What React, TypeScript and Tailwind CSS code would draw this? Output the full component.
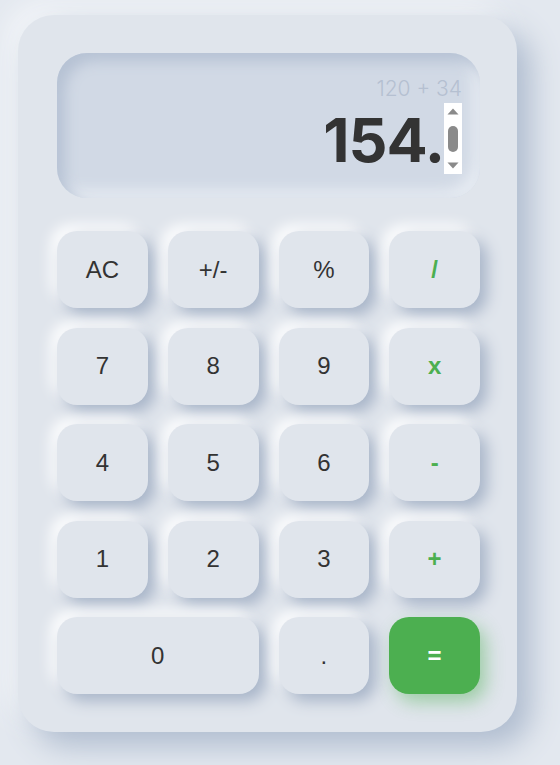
import React from "react";

const btnBase =
  "flex items-center justify-center h-[77px] rounded-[20px] bg-[#e0e5ec] text-[24px] shadow-[7px_7px_15px_#a7b4c8,-6px_-6px_14px_#ffffff]";

function Key({ label, op = false, wide = false }: { label: string; op?: boolean; wide?: boolean }) {
  return (
    <div
      className={
        btnBase +
        (wide ? " col-span-2" : "") +
        (op ? " text-[#4caf50] font-bold" : " text-[#333333]")
      }
      style={{ fontFamily: '"Liberation Sans", Arial, sans-serif' }}
    >
      {label}
    </div>
  );
}

export default function App() {
  return (
    <div className="min-h-[765px] w-[560px] bg-[#e3e8ef] pt-[15px] pl-[18px]">
      <div className="w-[499px] h-[717px] rounded-[36px] bg-[#e0e5ec] pt-[38px] pl-[39px] pr-[37px] shadow-[14px_14px_30px_#afbccf,-12px_-12px_30px_#f4f6f9]">
        <div className="h-[145px] rounded-[30px] bg-[#d1d9e5] shadow-[inset_8px_8px_14px_#b6c2d4,inset_-8px_-8px_14px_#e6ebf2] flex flex-col items-end pr-[18px] pt-[25px]">
          <div
            className="text-[21px] leading-[22px] font-light text-[#b5c0d1]"
            style={{ fontFamily: 'Inter, "Noto Sans", sans-serif' }}
          >
            120 + 34
          </div>
          <div className="flex items-start mt-[3px]">
            <div
              className="text-[61px] leading-[66px] font-bold text-[#333333] tracking-[-1px] mt-[4px]"
              style={{ fontFamily: 'Inter, "Noto Sans", sans-serif' }}
            >
              154.
            </div>
            <div className="w-[18px] h-[71px] bg-white flex flex-col items-center justify-between py-[5px]">
              <svg width="12" height="7" viewBox="0 0 12 7">
                <path d="M6 0.5 L11.5 6.5 L0.5 6.5 Z" fill="#8a8a8a" />
              </svg>
              <div className="w-[10px] h-[26px] rounded-full bg-[#8a8a8a]" />
              <svg width="12" height="7" viewBox="0 0 12 7">
                <path d="M0.5 0.5 L11.5 0.5 L6 6.5 Z" fill="#8a8a8a" />
              </svg>
            </div>
          </div>
        </div>
        <div className="grid grid-cols-4 gap-x-[20px] gap-y-[19.5px] mt-[33px]">
          <Key label="AC" />
          <Key label="+/-" />
          <Key label="%" />
          <Key label="/" op />
          <Key label="7" />
          <Key label="8" />
          <Key label="9" />
          <Key label="x" op />
          <Key label="4" />
          <Key label="5" />
          <Key label="6" />
          <Key label="-" op />
          <Key label="1" />
          <Key label="2" />
          <Key label="3" />
          <Key label="+" op />
          <Key label="0" wide />
          <Key label="." />
          <div
            className="flex items-center justify-center h-[77px] rounded-[20px] bg-[#4caf50] text-white font-bold text-[24px] shadow-[6px_8px_18px_rgba(76,175,80,0.45)]"
            style={{ fontFamily: '"Liberation Sans", Arial, sans-serif' }}
          >
            =
          </div>
        </div>
      </div>
    </div>
  );
}
